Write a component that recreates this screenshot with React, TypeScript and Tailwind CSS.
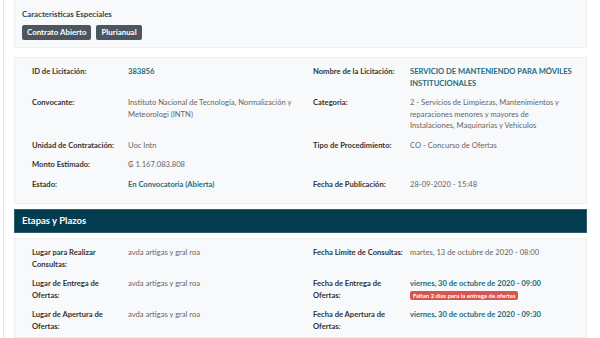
const font = { fontFamily: '"Lato", "Noto Sans", sans-serif' };

type Cell = { label: string; value: React.ReactNode };

function Label({ children }: { children: React.ReactNode }) {
  return <div className="pr-[3px] font-bold text-[#333]">{children}</div>;
}

function Link({ children }: { children: React.ReactNode }) {
  return <span className="font-bold text-[#236b80]">{children}</span>;
}

function Row({ left, right }: { left: Cell; right?: Cell }) {
  return (
    <>
      <Label>{left.label}</Label>
      <div className="pr-3 text-[#666]">{left.value}</div>
      {right ? <Label>{right.label}</Label> : <div />}
      <div className="text-[#666]">{right?.value}</div>
    </>
  );
}

function App() {
  return (
    <div className="flex h-[338px] w-[600px] overflow-hidden bg-white text-[7.6px] leading-[11.5px]" style={font}>
      <div className="ml-[3px] w-px bg-[#e3e3e3]" />
      <div className="ml-[10px] flex w-[573px] flex-col">
        <div className="h-[48px] shrink-0 border border-t-0 border-[#eceeef] bg-[#f8f9fa] px-[7px] pt-[9px]">
          <div className="text-[7.9px] font-bold text-[#24495a]">Caracteristicas Especiales</div>
          <div className="mt-[4px] flex gap-[5px]">
            <span className="rounded-[2px] bg-[#4b5661] px-[5px] py-[2px] text-[7.9px] font-bold text-white">Contrato Abierto</span>
            <span className="rounded-[2px] bg-[#4b5661] px-[5px] py-[2px] text-[7.9px] font-bold text-white">Plurianual</span>
          </div>
        </div>

        <div className="mt-[9px] border border-[#eceeef] bg-[#f8f9fa] pb-[13px] pl-[17px] pr-[18px] pt-[8px]">
          <div className="grid grid-cols-[96px_185px_97px_1fr] gap-y-[8px]">
            <Row
              left={{ label: "ID de Licitación:", value: <Link>383856</Link> }}
              right={{
                label: "Nombre de la Licitación:",
                value: (
                  <Link>
                    <span className="whitespace-nowrap">SERVICIO DE MANTENIENDO PARA MÓVILES</span>
                    <br />
                    INSTITUCIONALES
                  </Link>
                ),
              }}
            />
            <Row
              left={{ label: "Convocante:", value: "Instituto Nacional de Tecnología, Normalización y Meteorologi (INTN)" }}
              right={{ label: "Categoria:", value: "2 - Servicios de Limpiezas, Mantenimientos y reparaciones menores y mayores de Instalaciones, Maquinarias y Vehiculos" }}
            />
            <Row
              left={{ label: "Unidad de Contratación:", value: "Uoc Intn" }}
              right={{ label: "Tipo de Procedimiento:", value: "CO - Concurso de Ofertas" }}
            />
            <Row left={{ label: "Monto Estimado:", value: "₲ 1.167.083.808" }} />
            <Row
              left={{ label: "Estado:", value: <Link>En Convocatoria (Abierta)</Link> }}
              right={{ label: "Fecha de Publicación:", value: "28-09-2020 - 15:48" }}
            />
          </div>
        </div>

        <div className="mt-[5px] flex h-[24px] shrink-0 items-center border border-[#2d5f6f] bg-[#033c4f] px-[7px] text-[9.5px] font-bold text-white">
          Etapas y Plazos
        </div>

        <div className="mt-[5px] flex-1 border border-[#eceeef] bg-[#f8f9fa] pl-[17px] pr-[18px] pt-[8px]">
          <div className="grid grid-cols-[96px_185px_97px_1fr] gap-y-[8px]">
            <Row
              left={{ label: "Lugar para Realizar Consultas:", value: "avda artigas y gral roa" }}
              right={{ label: "Fecha Limite de Consultas:", value: "martes, 13 de octubre de 2020 - 08:00" }}
            />
            <Row
              left={{ label: "Lugar de Entrega de Ofertas:", value: "avda artigas y gral roa" }}
              right={{
                label: "Fecha de Entrega de Ofertas:",
                value: (
                  <div className="flex flex-col items-start">
                    <Link>viernes, 30 de octubre de 2020 - 09:00</Link>
                    <span className="mt-px rounded-[2px] bg-[#d9534f] px-[3px] text-[6px] leading-[9px] font-bold text-white">
                      Faltan 2 dias para la entrega de ofertas
                    </span>
                  </div>
                ),
              }}
            />
            <Row
              left={{ label: "Lugar de Apertura de Ofertas:", value: "avda artigas y gral roa" }}
              right={{ label: "Fecha de Apertura de Ofertas:", value: <Link>viernes, 30 de octubre de 2020 - 09:30</Link> }}
            />
          </div>
        </div>
      </div>
    </div>
  );
}

export default App;
